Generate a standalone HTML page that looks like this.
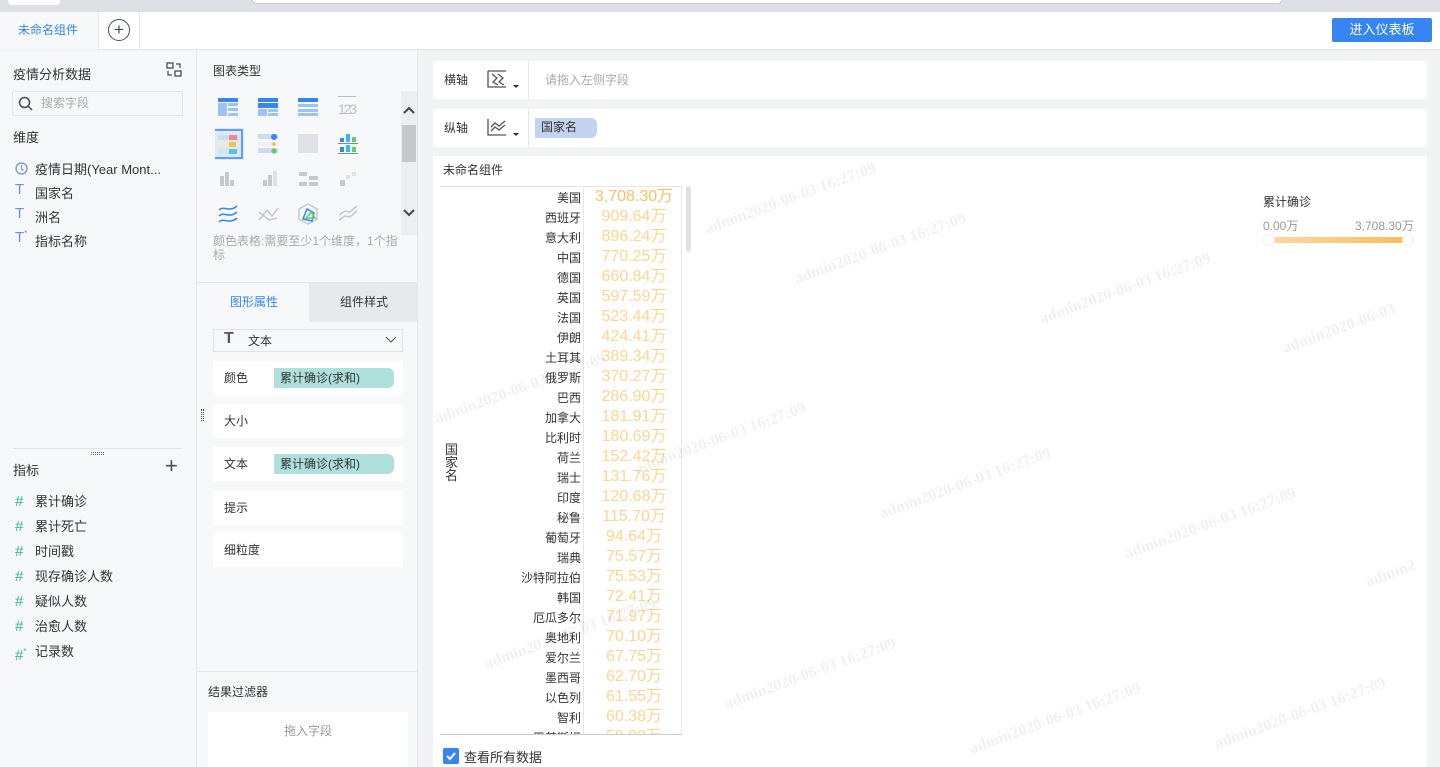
<!DOCTYPE html>
<html><head><meta charset="utf-8"><style>
*{box-sizing:border-box;margin:0;padding:0}
body{width:1440px;height:767px;overflow:hidden;font-family:"Liberation Sans","Noto Sans CJK SC",sans-serif;font-size:12px;color:#333;background:#f2f3f5;position:relative}
.a{position:absolute}
.card{position:absolute;background:#fff}
.lab{position:absolute;font-size:12px;color:#333;margin-top:-2px}
.pill{position:absolute;background:#b0e0dc;border-radius:0 6px 6px 0;color:#333;font-size:12px;line-height:20px;padding-left:6px}
.wm{position:absolute;color:rgba(0,0,0,0.06);font-family:"Liberation Serif",serif;font-weight:bold;font-size:16px;transform:rotate(-20deg);white-space:nowrap}
.row{position:absolute;left:0;width:246px;height:20px}
.row .n{position:absolute;right:105px;top:1px;font-size:12px;color:#333;text-align:right}
.row .v{position:absolute;left:146px;width:96px;text-align:center;top:-1px;font-size:16px;color:#fdd591;line-height:20px}
</style></head><body>
<div class="a" style="left:0;top:0;width:1440px;height:12px;background:#dee0e6"></div>
<div class="a" style="left:8px;top:0;width:52px;height:5px;background:#fff;border-radius:0 0 4px 4px"></div>
<div class="a" style="left:252px;top:0;width:1030px;height:4px;border:1px solid #c8cad0;border-top:none;border-radius:0 0 5px 5px;background:#fff"></div>
<div class="a" style="left:0;top:12px;width:1440px;height:38px;background:#fff;border-bottom:1px solid #e4e6ea"></div>
<div class="a" style="left:0;top:12px;width:98px;height:38px;background:#f7f8fa"></div>
<div class="a" style="left:18px;top:21px;color:#3685f2;font-size:12px">未命名组件</div>
<div class="a" style="left:98px;top:12px;width:1px;height:38px;background:#e4e6ea"></div>
<div class="a" style="left:139px;top:12px;width:1px;height:38px;background:#e4e6ea"></div>
<div class="a" style="left:108px;top:19px;width:22px;height:22px;border:1px solid #444c5a;border-radius:50%;text-align:center;line-height:19px;font-size:17px;color:#444c5a">+</div>
<div class="a" style="left:1332px;top:18px;width:100px;height:24px;background:#3685f2;border-radius:2px;color:#fff;text-align:center;line-height:23px;font-size:13px">进入仪表板</div>
<div class="a" style="left:0;top:51px;width:197px;height:716px;background:#f7f8fa;border-right:1px solid #e4e6ea"></div>
<div class="lab" style="left:13px;top:66px;font-size:13px">疫情分析数据</div>
<svg class="a" style="left:166px;top:62px" width="16" height="16" viewBox="0 0 16 16" fill="none" stroke="#444c5a" stroke-width="1.3"><rect x="1" y="1" width="6" height="5"/><rect x="9" y="9" width="6" height="5"/><path d="M2 9v4h4M10 2h4v4"/></svg>
<div class="a" style="left:12px;top:91px;width:171px;height:25px;border:1px solid #e1e3e8;border-radius:2px;background:#f7f8fa"></div>
<svg class="a" style="left:18px;top:96px" width="15" height="15" viewBox="0 0 15 15" fill="none" stroke="#444c5a" stroke-width="1.5"><circle cx="6.5" cy="6.5" r="5"/><path d="M10 10l4 4"/></svg>
<div class="lab" style="left:41px;top:96px;color:#aaa">搜索字段</div>
<div class="lab" style="left:13px;top:129px;font-size:13px">维度</div>
<svg class="a" style="left:15px;top:162px" width="13" height="13" viewBox="0 0 13 13" fill="none" stroke="#6c8de8" stroke-width="1.2"><circle cx="6.5" cy="6.5" r="5.5"/><path d="M6.5 3v4l2 1.5"/></svg>
<div class="lab" style="left:35px;top:161px;font-size:13px">疫情日期(Year Mont...</div>
<div class="lab" style="left:15px;top:183px;color:#6c8de8;font-size:15px">T</div><div class="lab" style="left:35px;top:185px;font-size:13px">国家名</div>
<div class="lab" style="left:15px;top:207px;color:#6c8de8;font-size:15px">T</div><div class="lab" style="left:35px;top:209px;font-size:13px">洲名</div>
<div class="lab" style="left:15px;top:231px;color:#6c8de8;font-size:15px">T<sup style="font-size:8px">*</sup></div><div class="lab" style="left:35px;top:233px;font-size:13px">指标名称</div>
<div class="a" style="left:13px;top:448px;width:170px;height:1px;background:#e1e3e8"></div>
<div class="a" style="left:91px;top:452px;width:13px;height:3px;border-top:1px dotted #666;border-bottom:1px dotted #666"></div>
<div class="lab" style="left:13px;top:462px;font-size:13px">指标</div>
<div class="lab" style="left:165px;top:455px;font-size:22px;color:#444c5a;line-height:26px">+</div>
<div class="a" style="left:15px;top:489px;color:#2fb3a5;font-size:15px;line-height:25px">#<br>#<br>#<br>#<br>#<br>#<br>#<sup style="font-size:8px">*</sup></div>
<div class="a" style="left:35px;top:489px;font-size:13px;line-height:25px;color:#333">累计确诊<br>累计死亡<br>时间戳<br>现存确诊人数<br>疑似人数<br>治愈人数<br>记录数</div>
<div class="a" style="left:197px;top:51px;width:221px;height:716px;background:#f7f8fa;border-right:1px solid #e4e6ea"></div>
<div class="lab" style="left:213px;top:64px">图表类型</div>
<svg class="a" style="left:215px;top:96px" width="190" height="140" viewBox="0 0 190 140">
<g transform="translate(3,2)"><rect width="20" height="4" fill="#3685f2"/><rect y="5" width="9" height="13" fill="#9cc2f7"/><rect x="10" y="5" width="10" height="3" fill="#9cc2f7"/><rect x="10" y="10" width="10" height="3" fill="#9cc2f7"/><rect x="10" y="15" width="10" height="3" fill="#9cc2f7"/></g>
<g transform="translate(43,2)"><rect width="20" height="4" fill="#3685f2"/><rect y="5" width="20" height="5" fill="#3685f2"/><rect y="11" width="9" height="7" fill="#9cc2f7"/><rect x="10" y="11" width="10" height="3" fill="#9cc2f7"/><rect x="10" y="15" width="10" height="3" fill="#9cc2f7"/></g>
<g transform="translate(83,2)"><rect width="20" height="4" fill="#3685f2"/><rect y="6" width="20" height="3" fill="#9cc2f7"/><rect y="11" width="20" height="3" fill="#9cc2f7"/><rect y="15" width="20" height="3" fill="#9cc2f7"/></g>
<rect x="123" y="0" width="18" height="1" fill="#b8bcc4"/>
<text x="123" y="18" font-size="14" fill="#b8bcc4" font-family="Liberation Sans" textLength="19">123</text>
<rect x="-3" y="32" width="32" height="32" fill="#dce8fb"/><rect x="-1" y="34" width="28" height="28" fill="none" stroke="#3685f2" stroke-width="1.5"/>
<rect x="3" y="39" width="20" height="5" fill="#cfdcf0"/><rect x="14" y="39" width="8" height="5" fill="#f08a8a"/><rect x="3" y="46" width="20" height="5" fill="#f2ead0"/><rect x="14" y="46" width="7" height="5" fill="#f6c34a"/><rect x="3" y="53" width="20" height="5" fill="#cfe7f5"/><rect x="14" y="53" width="8" height="5" fill="#5cc0ee"/>
<g transform="translate(43,38)"><rect width="20" height="5" fill="#cfdcf0"/><rect y="8" width="20" height="4" fill="#eef0f5"/><rect y="14" width="20" height="5" fill="#cfdcf0"/><circle cx="16" cy="3" r="3" fill="#3685f2"/><circle cx="16" cy="10" r="1.6" fill="#fbb900"/><circle cx="16" cy="17" r="2.6" fill="#5fd068"/></g>
<rect x="83" y="38" width="20" height="19" fill="#dfe1e6"/>
<g transform="translate(123,36)"><rect x="2" y="6" width="4" height="4" fill="#3685f2"/><rect x="8" y="2" width="4" height="8" fill="#36b8f2"/><rect x="14" y="5" width="4" height="5" fill="#5fd068"/><rect y="11" width="20" height="1" fill="#888"/><rect x="2" y="15" width="4" height="5" fill="#3685f2"/><rect x="8" y="13" width="4" height="7" fill="#36b8f2"/><rect x="14" y="15" width="4" height="5" fill="#5fd068"/><rect y="21" width="20" height="1" fill="#888"/></g>
<g fill="#c3c8d2"><rect x="5" y="80" width="4" height="10"/><rect x="10" y="76" width="4" height="14"/><rect x="15" y="84" width="4" height="6"/><rect x="48" y="84" width="4" height="6"/><rect x="53" y="79" width="4" height="11"/><rect x="58" y="75" width="4" height="15" fill="#dfe1e6"/><rect x="84" y="76" width="8" height="4"/><rect x="94" y="80" width="9" height="4"/><rect x="84" y="86" width="8" height="4"/><rect x="94" y="86" width="9" height="4"/><rect x="125" y="84" width="5" height="6"/><rect x="131" y="79" width="4" height="4" fill="#dfe1e6"/><rect x="137" y="76" width="4" height="4" fill="#dfe1e6"/></g>
<g fill="none" stroke-width="1.5"><path d="M4 120c5-5 10 3 18-4M4 126c5-5 10 3 18-4M4 114c5-5 10 3 18-4" stroke="#3685f2"/><path d="M44 124l8-10 5 6 6-8M44 116l10 8 8-2" stroke="#c3c8d2"/><path d="M93 108l9 5v10l-9 5-9-5v-10z" stroke="#c3c8d2"/><path d="M88 123l4-10 7 4-2 8z" stroke="#3685f2"/><path d="M91 122l5-6 4 6z" stroke="#5fd068"/><path d="M124 124l6-4 5 1 7-6M124 119l6-4 5 1 7-6" stroke="#c3c8d2"/></g>
</svg>
<div class="a" style="left:401px;top:91px;width:16px;height:144px;background:#eceef1"></div>
<div class="a" style="left:402px;top:125px;width:14px;height:37px;background:#c6c8cc"></div>
<svg class="a" style="left:403px;top:106px" width="12" height="140" viewBox="0 0 12 140" fill="none" stroke="#444" stroke-width="2"><path d="M1 7l5-5 5 5M1 104l5 5 5-5"/></svg>
<div class="lab" style="left:213px;top:236px;width:190px;color:#aaa;line-height:14px">颜色表格:需要至少1个维度，1个指标</div>
<div class="a" style="left:197px;top:282px;width:221px;height:1px;background:#e4e6ea"></div>
<div class="a" style="left:309px;top:283px;width:109px;height:39px;background:#e8e9ed"></div>
<div class="lab" style="left:230px;top:295px;color:#3685f2">图形属性</div>
<div class="lab" style="left:340px;top:295px">组件样式</div>
<div class="a" style="left:213px;top:329px;width:190px;height:23px;border:1px solid #e1e3e8;background:#f7f8fa"></div>
<div class="lab" style="left:224px;top:333px;font-size:16px;color:#555;font-weight:bold;line-height:16px">T</div>
<div class="lab" style="left:248px;top:334px">文本</div>
<svg class="a" style="left:385px;top:336px" width="12" height="8" viewBox="0 0 12 8" fill="none" stroke="#555"><path d="M1 1l5 5 5-5"/></svg>
<div class="card" style="left:213px;top:361px;width:190px;height:34px"></div><div class="lab" style="left:224px;top:371px">颜色</div><div class="pill" style="left:274px;top:368px;width:120px">累计确诊(求和)</div>
<div class="card" style="left:213px;top:404px;width:190px;height:34px"></div><div class="lab" style="left:224px;top:414px">大小</div>
<div class="a" style="left:201px;top:409px;width:3px;height:12px;border-left:1px dotted #555;border-right:1px dotted #555"></div>
<div class="card" style="left:213px;top:447px;width:190px;height:34px"></div><div class="lab" style="left:224px;top:457px">文本</div><div class="pill" style="left:274px;top:454px;width:120px">累计确诊(求和)</div>
<div class="card" style="left:213px;top:491px;width:190px;height:34px"></div><div class="lab" style="left:224px;top:501px">提示</div>
<div class="card" style="left:213px;top:533px;width:190px;height:34px"></div><div class="lab" style="left:224px;top:543px">细粒度</div>
<div class="a" style="left:197px;top:671px;width:221px;height:1px;background:#e4e6ea"></div>
<div class="lab" style="left:208px;top:685px">结果过滤器</div>
<div class="card" style="left:208px;top:712px;width:200px;height:55px"></div>
<div class="lab" style="left:284px;top:724px;color:#999">拖入字段</div>
<div class="card" style="left:433px;top:61px;width:994px;height:38px"></div>
<div class="lab" style="left:444px;top:73px">横轴</div>
<svg class="a" style="left:487px;top:70px" width="34" height="20" viewBox="0 0 34 20" fill="none" stroke="#555" stroke-width="1.3"><path d="M1 1v16h18M1 1h18M5 4l5 4-4 4 5 3M11 4l5 4-4 4 5 3"/><path d="M26 15h6l-3 3z" fill="#333" stroke="none"/></svg>
<div class="a" style="left:528px;top:61px;width:1px;height:38px;background:#e4e6ea"></div>
<div class="lab" style="left:545px;top:73px;color:#aaa">请拖入左侧字段</div>
<div class="card" style="left:433px;top:109px;width:994px;height:38px"></div>
<div class="lab" style="left:444px;top:121px">纵轴</div>
<svg class="a" style="left:487px;top:118px" width="34" height="20" viewBox="0 0 34 20" fill="none" stroke="#555" stroke-width="1.3"><path d="M1 1v16h18M4 9l4-4 4 3 6-5M4 13l4-4 4 3 6-5"/><path d="M26 15h6l-3 3z" fill="#333" stroke="none"/></svg>
<div class="a" style="left:528px;top:109px;width:1px;height:38px;background:#e4e6ea"></div>
<div class="a" style="left:535px;top:118px;width:62px;height:20px;background:#c2d2f0;border-radius:0 6px 6px 0;line-height:19px;padding-left:6px;color:#333">国家名</div>
<div class="card" style="left:433px;top:156px;width:994px;height:611px"></div>
<div class="lab" style="left:443px;top:163px">未命名组件</div>
<div class="a" style="left:440px;top:186px;width:242px;height:549px;border-top:1px solid #e4e6ea;border-bottom:1px solid #ccc;border-right:1px solid #e4e6ea;overflow:hidden">
<div class="a" style="left:143px;top:0;width:1px;height:549px;background:#e4e6ea"></div>
<div class="a" style="left:5px;top:256px;width:14px;font-size:13px;line-height:13px;color:#333">国家名</div>
<div id="rows"></div>
</div>
<div class="a" style="left:686px;top:186px;width:5px;height:66px;background:#e0e1e4;border-radius:3px"></div>
<div class="a" style="left:443px;top:748px;width:16px;height:16px;background:#3685f2;border-radius:2px"></div>
<svg class="a" style="left:445px;top:750px" width="12" height="12" viewBox="0 0 12 12" fill="none" stroke="#fff" stroke-width="2"><path d="M2 6l3 3 5-6"/></svg>
<div class="lab" style="left:464px;top:749px;font-size:13px">查看所有数据</div>
<div class="lab" style="left:1263px;top:195px">累计确诊</div>
<div class="lab" style="left:1263px;top:219px;color:#999">0.00万</div>
<div class="lab" style="left:1355px;top:219px;color:#999">3,708.30万</div>
<div class="a" style="left:1269px;top:237px;width:138px;height:6px;background:linear-gradient(90deg,#fcd9a0,#fcbd58)"></div>
<div class="a" style="left:1263px;top:234px;width:12px;height:12px;border-radius:50%;background:#fff;border:1px solid #f0f0f0"></div>
<div class="a" style="left:1402px;top:234px;width:12px;height:12px;border-radius:50%;background:#fff;border:1px solid #f0f0f0"></div>
<div class="wm" style="left:700px;top:190px">admin2020-06-03 16:27:09</div>
<div class="wm" style="left:790px;top:240px">admin2020-06-03 16:27:09</div>
<div class="wm" style="left:1035px;top:280px">admin2020-06-03 16:27:09</div>
<div class="wm" style="left:1280px;top:320px">admin2020-06-03</div>
<div class="wm" style="left:430px;top:380px">admin2020-06-03 16:27:09</div>
<div class="wm" style="left:630px;top:430px">admin2020-06-03 16:27:09</div>
<div class="wm" style="left:875px;top:475px">admin2020-06-03 16:27:09</div>
<div class="wm" style="left:1120px;top:515px">admin2020-06-03 16:27:09</div>
<div class="wm" style="left:1365px;top:565px">admin2</div>
<div class="wm" style="left:480px;top:625px">admin2020-06-03 16:27:09</div>
<div class="wm" style="left:720px;top:665px">admin2020-06-03 16:27:09</div>
<div class="wm" style="left:965px;top:710px">admin2020-06-03 16:27:09</div>
<div class="wm" style="left:1210px;top:705px">admin2020-06-03 16:27:09</div>
<script>
var d=[["美国","3,708.30万"],["西班牙","909.64万"],["意大利","896.24万"],["中国","770.25万"],["德国","660.84万"],["英国","597.59万"],["法国","523.44万"],["伊朗","424.41万"],["土耳其","389.34万"],["俄罗斯","370.27万"],["巴西","286.90万"],["加拿大","181.91万"],["比利时","180.69万"],["荷兰","152.42万"],["瑞士","131.76万"],["印度","120.68万"],["秘鲁","115.70万"],["葡萄牙","94.64万"],["瑞典","75.57万"],["沙特阿拉伯","75.53万"],["韩国","72.41万"],["厄瓜多尔","71.97万"],["奥地利","70.10万"],["爱尔兰","67.75万"],["墨西哥","62.70万"],["以色列","61.55万"],["智利","60.38万"],["巴基斯坦","58.90万"]];
var h="";d.forEach(function(r,i){h+='<div class="row" style="top:'+(1+i*20)+'px"><span class="n">'+r[0]+'</span><span class="v"'+(i==0?' style="color:#fcc068"':'')+'>'+r[1]+'</span></div>';});
document.getElementById("rows").innerHTML=h;
</script>
</body></html>
